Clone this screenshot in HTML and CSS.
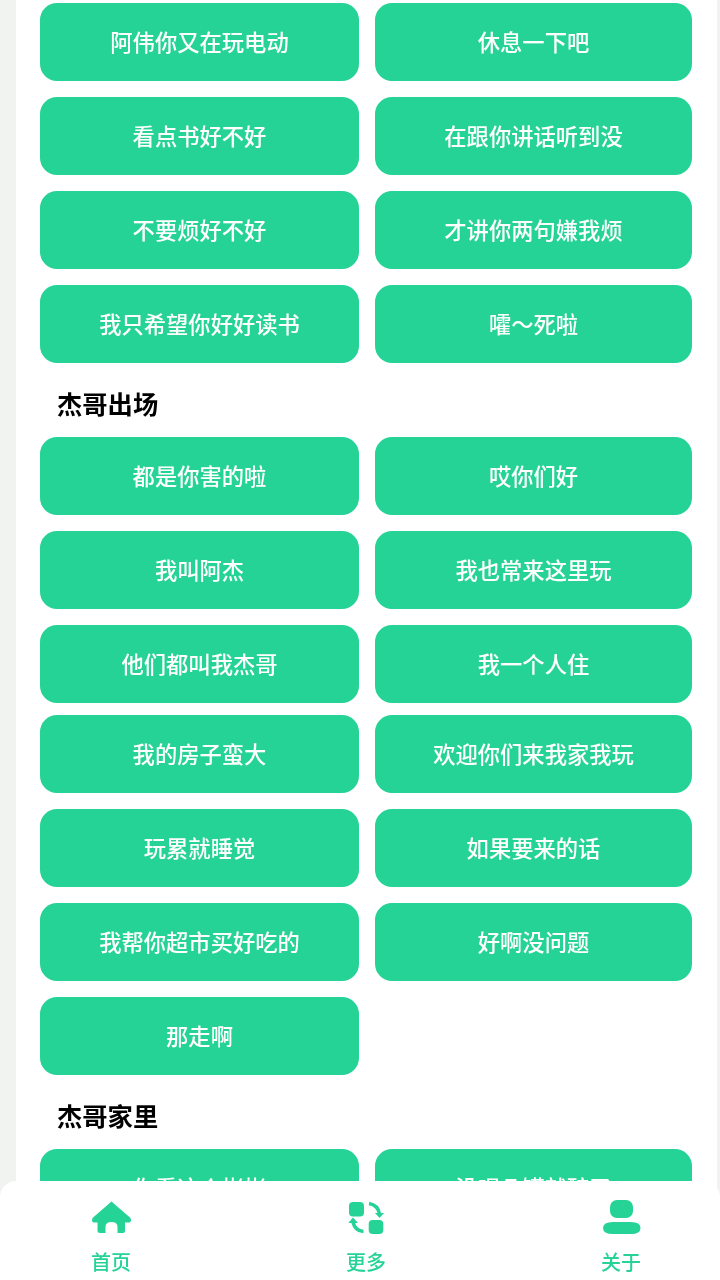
FILE: index.html
```html
<!DOCTYPE html>
<html lang="zh-CN">
<head>
<meta charset="utf-8">
<title>杰哥不要</title>
<link rel="stylesheet" href="styles.css">
</head>
<body>
<main class="card">
  <div class="grid">
    <button class="btn">阿伟你又在玩电动</button><button class="btn">休息一下吧</button>
    <button class="btn">看点书好不好</button><button class="btn">在跟你讲话听到没</button>
    <button class="btn">不要烦好不好</button><button class="btn">才讲你两句嫌我烦</button>
    <button class="btn">我只希望你好好读书</button><button class="btn">&#22191;～死啦</button>
  </div>
  <h2 class="title">杰哥出场</h2>
  <div class="grid">
    <button class="btn">都是你害的啦</button><button class="btn">哎你们好</button>
    <button class="btn">我叫阿杰</button><button class="btn">我也常来这里玩</button>
    <button class="btn">他们都叫我杰哥</button><button class="btn">我一个人住</button>
  </div>
  <div class="grid grid-tight">
    <button class="btn">我的房子蛮大</button><button class="btn">欢迎你们来我家我玩</button>
    <button class="btn">玩累就睡觉</button><button class="btn">如果要来的话</button>
    <button class="btn">我帮你超市买好吃的</button><button class="btn">好啊没问题</button>
    <button class="btn">那走啊</button>
  </div>
  <h2 class="title">杰哥家里</h2>
  <div class="grid">
    <button class="btn">你看这个彬彬</button><button class="btn">没喝几罐就醉了</button>
  </div>
</main>
<nav class="tabbar">
  <a class="tab">
    <svg class="icon" viewBox="0 0 40 40"><path d="M20.500 3.500 L39.500 20 Q41 24.500 38 24.500 L34 24.500 L34 33 Q34 35 32 35 L26.500 35 L26.500 29 Q26.500 24 20.500 24 Q14.500 24 14.500 29 L14.500 35 L9 35 Q6.500 35 6.500 33 L6.500 24.500 L3 24.500 Q0 24.500 1.500 20 Z"/></svg>
    <span class="label">首页</span>
  </a>
  <a class="tab">
    <svg class="icon" viewBox="0 0 40 40"><rect x="3" y="4" width="15" height="14.500" rx="4"/><rect x="22.700" y="22" width="14.600" height="14" rx="4"/><path class="arrow" d="M23 5.500 Q32 7 33.500 16"/><path d="M29 15 L38 15 L33.500 20 Z"/><path class="arrow" d="M17.500 33.500 Q9 33 7 24"/><path d="M2.300 25 L7 19.500 L12 25 Z"/></svg>
    <span class="label">更多</span>
  </a>
  <a class="tab">
    <svg class="icon" viewBox="0 0 40 40"><rect x="9" y="2" width="23" height="18" rx="7"/><path d="M2 30 Q2 24 12 24 L30 24 Q39.500 24 39.500 30 Q39.500 36 30 36 L12 36 Q2 36 2 30 Z"/></svg>
    <span class="label">关于</span>
  </a>
</nav>
</body>
</html>
```

FILE: styles.css
```css
html, body {
  margin: 0;
  height: 1280px;
  overflow: hidden;
  background: #f1f3f0;
  font-family: "Noto Sans CJK SC", "Noto Sans", sans-serif;
}
.card {
  margin: 0 3px 0 16px;
  height: 1280px;
  padding: 3px 25px 0 24px;
  box-sizing: border-box;
  background: #fff;
  filter: blur(0.5px);
}
.grid {
  display: grid;
  grid-template-columns: 319px 317px;
  column-gap: 16px;
  row-gap: 16px;
}
.grid-tight {
  margin-top: 12px;
}
.btn {
  height: 78px;
  padding: 0 0 2px;
  border: 0;
  border-radius: 17px;
  background: #26d397;
  color: #fff;
  font-family: inherit;
  font-size: 22.3px;
  font-weight: 500;
}
.title {
  margin: 0;
  height: 74px;
  box-sizing: border-box;
  padding: 22px 0 0 17px;
  font-size: 25.300px;
  font-weight: 700;
  line-height: 36px;
  color: #000;
}
.tabbar {
  position: fixed;
  left: 0;
  right: 0;
  bottom: 0;
  height: 99px;
  box-sizing: border-box;
  padding: 0 67px 0 79px;
  display: flex;
  justify-content: space-between;
  background: #fff;
  border-radius: 16px 16px 0 0;
}
.tab {
  width: 64px;
  display: flex;
  flex-direction: column;
  align-items: center;
  padding-top: 17px;
  filter: blur(0.5px);
}
.icon {
  width: 40px;
  height: 40px;
  fill: #26d397;
}
.arrow {
  fill: none;
  stroke: #26d397;
  stroke-width: 3.500;
}
.label {
  margin-top: 9px;
  font-size: 20px;
  line-height: 30px;
  font-weight: 500;
  color: #26d397;
}
```
